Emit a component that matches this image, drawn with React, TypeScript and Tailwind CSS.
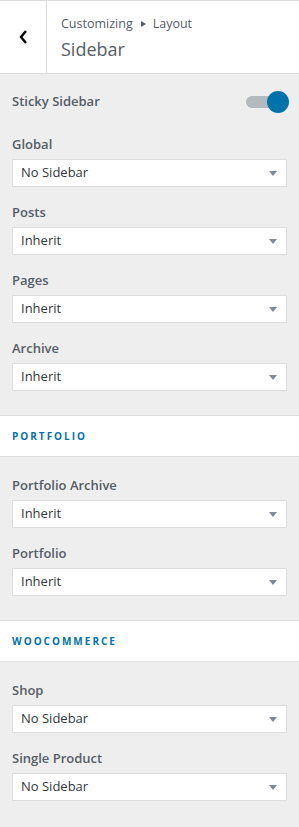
const font = { fontFamily: '"Segoe UI", "Open Sans", "Noto Sans", sans-serif' };

function Select({ value }: { value: string }) {
  return (
    <div className="mt-[5px] flex h-[28px] items-center justify-between border border-[#ddd] bg-white pl-[8px] pr-[8px] text-[13px] text-[#32373c]">
      <span>{value}</span>
      <svg width="8" height="5" viewBox="0 0 8 5" className="mr-[1px]">
        <path d="M0 0h8L4 5z" fill="#7e8993" />
      </svg>
    </div>
  );
}

function Field({ label, value }: { label: string; value: string }) {
  return (
    <div className="mb-[15px]">
      <div className="text-[13px] font-semibold leading-[20px] text-[#555d66]">{label}</div>
      <Select value={value} />
    </div>
  );
}

function Section({ title }: { title: string }) {
  return (
    <div className="mt-[9px] flex h-[42px] items-center border-y border-[#ddd] bg-white px-[12px]">
      <span className="text-[10px] font-bold tracking-[2px] text-[#0073aa]">{title}</span>
    </div>
  );
}

export default function App() {
  return (
    <div className="flex min-h-[827px] w-[299px] flex-col bg-[#eee]" style={font}>
      <div className="flex h-[74px] border-y border-[#ddd] bg-white">
        <div className="flex w-[47px] items-center justify-center border-r border-[#ddd]">
          <svg width="10" height="14" viewBox="0 0 10 14">
            <path d="M8 1L3 7l5 6" fill="none" stroke="#000" strokeWidth="2.4" />
          </svg>
        </div>
        <div className="flex flex-col justify-center pl-[14px] pt-[2px]">
          <div className="flex items-center text-[12.5px] leading-[18px] text-[#555d66]">
            Customizing
            <svg width="6" height="6" viewBox="0 0 6 6" className="mx-[7px]">
              <path d="M1 0l5 3-5 3z" fill="#555d66" />
            </svg>
            Layout
          </div>
          <div className="mt-[4px] text-[18px] leading-[24px] text-[#555d66]">Sidebar</div>
        </div>
      </div>

      <div className="flex flex-col px-[12px] pt-[17px]">
        <div className="mb-[21px] flex items-center justify-between">
          <span className="text-[13px] font-semibold text-[#555d66]">Sticky Sidebar</span>
          <div className="relative mr-[-2px] h-[22px] w-[43px]">
            <div className="absolute left-0 top-[5px] h-[12px] w-[36px] rounded-full bg-[#b4b9be]" />
            <div className="absolute right-0 top-0 h-[22px] w-[22px] rounded-full bg-[#0073aa]" />
          </div>
        </div>
        <Field label="Global" value="No Sidebar" />
        <Field label="Posts" value="Inherit" />
        <Field label="Pages" value="Inherit" />
        <Field label="Archive" value="Inherit" />
      </div>

      <Section title="PORTFOLIO" />
      <div className="flex flex-col px-[12px] pt-[18px]">
        <Field label="Portfolio Archive" value="Inherit" />
        <Field label="Portfolio" value="Inherit" />
      </div>

      <Section title="WOOCOMMERCE" />
      <div className="flex flex-col px-[12px] pt-[18px]">
        <Field label="Shop" value="No Sidebar" />
        <Field label="Single Product" value="No Sidebar" />
      </div>
    </div>
  );
}
